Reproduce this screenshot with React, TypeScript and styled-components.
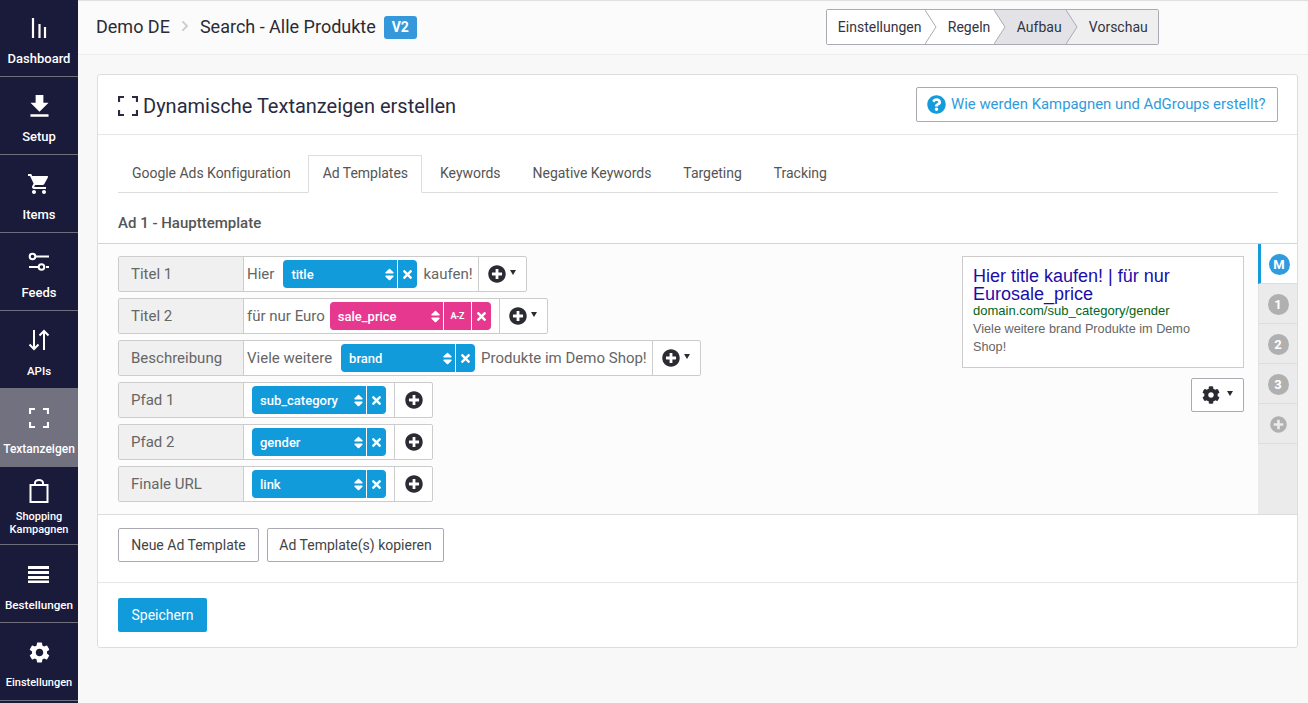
import React from "react";
import styled, { createGlobalStyle } from "styled-components";
import { FaCog, FaPlusCircle, FaQuestionCircle, FaSort, FaTimes, FaChevronRight } from "react-icons/fa";
import { MdFileDownload, MdShoppingCart, MdSettings } from "react-icons/md";

const Global = createGlobalStyle`
  html, body { margin: 0; padding: 0; height: 100%; overflow: hidden; background: #f8f8f8; }
  body { font-family: Roboto, "Liberation Sans", sans-serif; font-size: 14px; color: #555; }
  * { box-sizing: border-box; }
`;

const Shell = styled.div`display: flex; width: 1308px; height: 703px;`;

const Sidebar = styled.nav`width: 78px; flex: none; background: #1a1a3a; display: flex; flex-direction: column; overflow: hidden;`;
const NavItem = styled.div<{ $active?: boolean }>`
  height: 78px; flex: none; border-bottom: 1px solid ${p => (p.$active ? "#72717f" : "#6e6e7c")};
  background: ${p => (p.$active ? "#72717f" : "transparent")};
  ${p => (p.$active ? "box-shadow: 0 -1px 0 #72717f;" : "")}
  color: #fff; display: flex; flex-direction: column; align-items: center;
  &:first-child { margin-top: -1px; }
`;
const NavIcon = styled.div<{ $short?: boolean }>`height: ${p => (p.$short ? 30 : 40)}px; margin-top: 9px; display: flex; align-items: center; justify-content: center; flex: none;`;
const NavLabel = styled.div<{ $size?: number; $tight?: boolean }>`
  font-size: ${p => p.$size ?? 12}px; font-weight: 500; line-height: ${p => (p.$tight ? 13 : 16)}px; text-align: center; white-space: nowrap;
  margin-top: ${p => (p.$tight ? 4 : 3)}px;
`;

const Main = styled.main`flex: 1; min-width: 0; display: flex; flex-direction: column;`;
const TopBar = styled.header`
  height: 55px; flex: none; background: #fbfbfb; border-bottom: 1px solid #ececec; box-shadow: inset 0 1px 1px #ddd;
  display: flex; align-items: center; padding: 0 0 2px 18px; color: #2b2b36; font-size: 18px;
`;
const Crumb = styled.span``;
const CrumbSep = styled.span`display: inline-flex; color: #ccc; margin: 0 9px 0 9px;`;
const Badge = styled.span`
  background: #3498db; color: #fff; font-size: 14px; font-weight: 700; border-radius: 3px; width: 33px; height: 23px;
  display: inline-flex; align-items: center; justify-content: center; margin: 2px 0 0 8px;
`;
const Steps = styled.div`
  margin: 9px 0 0 409px; align-self: flex-start; display: flex; height: 36px; border: 1px solid #aaaab4; border-radius: 2px; background: #fff; overflow: hidden;
`;
const Step = styled.div<{ $w: number; $bg: string; $pl: number }>`
  width: ${p => p.$w}px; background: ${p => p.$bg}; font-size: 14px; color: #33333f; position: relative;
  display: flex; align-items: center; padding-left: ${p => p.$pl}px;
`;
const StepTip = styled.svg`position: absolute; right: -11px; top: 0; z-index: 1;`;
const StepText = styled.span`position: relative; z-index: 2;`;

const Content = styled.div`padding: 19px 10px 0 19px;`;
const Card = styled.section`background: #fff; border: 1px solid #ddd; border-radius: 3px; height: 574px; display: flex; flex-direction: column;`;
const CardHead = styled.div`height: 60px; flex: none; border-bottom: 1px solid #e6e6e6; display: flex; align-items: center; padding: 0 19px 0 20px; justify-content: space-between;`;
const CardTitle = styled.h1`margin: 2px 0 0; font-size: 20px; font-weight: 400; color: #2a2a40; display: flex; align-items: center; gap: 5px;`;
const HelpBtn = styled.div`
  height: 35px; width: 362px; border: 1px solid #aaaab4; border-radius: 2px; display: flex; align-items: center; padding-left: 10px; gap: 5px;
  color: #2f9bdc; font-size: 14.9px; margin-top: -1px;
`;
const TabsWrap = styled.div`padding: 20px 19px 0 20px;`;
const Tabs = styled.div`display: flex; gap: 4px; height: 38px; border-bottom: 1px solid #ddd;`;
const Tab = styled.div<{ $active?: boolean }>`
  height: 38px; padding: 0 13px 2px; display: flex; align-items: center; font-size: 14px; letter-spacing: -.03px; color: #555; white-space: nowrap;
  ${p => p.$active ? "background:#fff;border:1px solid #ddd;border-bottom-color:#fff;margin-left:-1px;padding-left:14px;" : "border:1px solid transparent;"}
`;
const SectionTitle = styled.h2`margin: 0; padding: 22px 20px 0; height: 50px; font-size: 15px; font-weight: 500; line-height: 17px; color: #555;`;
const Editor = styled.div`height: 272px; flex: none; background: #fcfcfc; border-top: 1px solid #d4d4d4; border-bottom: 1px solid #ddd; display: flex;`;
const Rows = styled.div`flex: 1; padding: 12px 0 0 20px; display: flex; flex-direction: column; gap: 6px;`;
const Row = styled.div`display: flex; height: 36px; width: fit-content; border: 1px solid #ccc; border-radius: 2px; background: #fff;`;
const RowLabel = styled.div`width: 125px; background: #f0f0f0; border-right: 1px solid #ccc; padding-left: 12px; display: flex; align-items: center; color: #666; font-size: 15px;`;
const RowBody = styled.div<{ $pl?: number; $pr?: number }>`display: flex; align-items: center; padding: 0 ${p => p.$pr ?? 5}px 0 ${p => p.$pl ?? 3}px;`;
const Txt = styled.span<{ $mr?: number; $ml?: number }>`color: #666; font-size: 15px; white-space: nowrap; margin-right: ${p => p.$mr ?? 0}px; margin-left: ${p => p.$ml ?? 0}px;`;
const Pill = styled.div<{ $pink?: boolean }>`display: flex; height: 28px; color: #fff; border-radius: 4px; overflow: hidden; gap: 1px; font-size: 13px; font-weight: 500; & > * { background: ${p => (p.$pink ? "#e6388f" : "#129bdb")}; }`;
const PillSelect = styled.div<{ $w?: number }>`width: ${p => p.$w ?? 114}px; display: flex; align-items: center; justify-content: space-between; padding: 0 0 0 8px;`;
const PillBtn = styled.div<{ $w?: number }>`width: ${p => p.$w ?? 19}px; display: flex; align-items: center; justify-content: center;`;
const AZ = styled.span`font-size: 9px; font-weight: 700; letter-spacing: -.5px;`;
const AddCell = styled.div<{ $narrow?: boolean }>`
  width: ${p => (p.$narrow ? 38 : 48)}px; border-left: 1px solid #ccc; display: flex; align-items: center; justify-content: center; gap: 4px; color: #2b2b33;
`;
const Caret = styled.span`width: 0; height: 0; border-left: 3px solid transparent; border-right: 3px solid transparent; border-top: 5px solid currentColor; margin-top: -3px;`;

const PreviewCol = styled.div`width: 282px; flex: none; margin-right: 14px; padding-top: 12px; display: flex; flex-direction: column; align-items: flex-end;`;
const Preview = styled.div`width: 100%; height: 112px; background: #fff; border: 1px solid #ccc; padding: 9px 30px 0 10px; font-family: "Liberation Sans", Arial, sans-serif;`;
const AdTitle = styled.div`font-size: 18px; line-height: 18px; color: #1a0dab; padding-top: 1px; margin-bottom: -1px;`;
const AdUrl = styled.div`font-size: 13px; line-height: 18px; color: #006621;`;
const AdDesc = styled.div`font-size: 12.7px; line-height: 18px; color: #666;`;
const GearBtn = styled.div`width: 53px; height: 34px; border: 1px solid #aaaab4; border-radius: 2px; background: #fff; margin-top: 10px; display: flex; align-items: center; justify-content: center; gap: 7px; color: #2b2b33;`;

const SideTabs = styled.div`width: 39px; flex: none; background: #ebebeb; display: flex; flex-direction: column;`;
const SideTab = styled.div<{ $active?: boolean }>`
  height: 40px; padding-top: 2px; display: flex; align-items: center; justify-content: center; color: #b0b0b0; border-bottom: 1px solid #ddd; border-left: 1px solid #e2e2e2;
  ${p => p.$active ? "background:#fff;border-left:3px solid #139bdc;" : ""}
`;
const Num = styled.span<{ $blue?: boolean }>`width: 21px; height: 21px; border-radius: 50%; background: ${p => (p.$blue ? "#2f9be0" : "#b0b0b0")}; color: #fff; font-size: 13px; font-weight: 700; display: flex; align-items: center; justify-content: center;`;

const Actions = styled.div`height: 68px; flex: none; border-bottom: 1px solid #e6e6e6; display: flex; gap: 8px; padding: 13px 20px 0;`;
const Btn = styled.div<{ $w: number }>`width: ${p => p.$w}px; height: 34px; border: 1px solid #aaaab4; border-radius: 2px; background: #fff; display: flex; align-items: center; justify-content: center; color: #444; font-size: 14px; white-space: nowrap;`;
const Footer = styled.div`padding: 15px 20px;`;
const Primary = styled.div`width: 89px; height: 34px; background: #129bdb; color: #fff; border-radius: 2px; display: flex; align-items: center; justify-content: center; font-size: 14px;`;

const BarsIcon = () => (
  <svg width="16" height="20" viewBox="0 0 16 20" fill="none" stroke="#fff" strokeWidth="2.2">
    <path d="M2 0v20M8.5 6v14M14 9v11" />
  </svg>
);
const SlidersIcon = () => (
  <svg width="22" height="20" viewBox="0 0 22 20" fill="none" stroke="#fff" strokeWidth="2">
    <circle cx="4.5" cy="4.5" r="2.8" /><path d="M8 4.5h13M1 15h10M18 15h3" /><circle cx="13.5" cy="15" r="2.8" />
  </svg>
);
const ArrowsIcon = () => (
  <svg width="22" height="22" viewBox="0 0 22 22" fill="none" stroke="#fff" strokeWidth="2">
    <path d="M6 1v19M1.5 15.5 6 20l4.5-4.5M16 21V2M11.5 6.5 16 2l4.5 4.5" />
  </svg>
);
const CornersIcon = ({ color = "#fff", size = 20 }: { color?: string; size?: number }) => (
  <svg width={size} height={size} viewBox="0 0 20 20" fill="none" stroke={color} strokeWidth="2.2">
    <path d="M1 6V1h5M14 1h5v5M19 14v5h-5M6 19H1v-5" />
  </svg>
);
const BagIcon = () => (
  <svg width="20" height="24" viewBox="0 0 20 24" fill="none" stroke="#fff" strokeWidth="2">
    <rect x="1.5" y="6" width="17" height="17" /><path d="M6 6V4a4 3 0 0 1 8 0v2" />
  </svg>
);
const LinesIcon = () => (
  <svg width="22" height="18" viewBox="0 0 22 18" fill="#fff">
    <rect y="1" width="21" height="3" /><rect y="6" width="21" height="3" /><rect y="11" width="21" height="3" /><rect y="15.5" width="21" height="2.5" />
  </svg>
);

const tip = (fill: string) => (
  <StepTip width="12" height="34" viewBox="0 0 12 34"><path d="M0 0 11 17 0 34Z" fill={fill} /><path d="M0 0 11 17 0 34" fill="none" stroke="#aaaab4" /></StepTip>
);

const Token = ({ name, pink }: { name: string; pink?: boolean }) => (
  <Pill $pink={pink}>
    <PillSelect $w={pink ? 113 : 114}>{name}<FaSort size={15} /></PillSelect>
    {pink && <PillBtn $w={27}><AZ>A-Z</AZ></PillBtn>}
    <PillBtn><FaTimes size={13} /></PillBtn>
  </Pill>
);
const Add = ({ narrow }: { narrow?: boolean }) => (
  <AddCell $narrow={narrow}><FaPlusCircle size={18} />{!narrow && <Caret />}</AddCell>
);

export default function App() {
  return (
    <Shell>
      <Global />
      <Sidebar>
        <NavItem><NavIcon><BarsIcon /></NavIcon><NavLabel $size={13}>Dashboard</NavLabel></NavItem>
        <NavItem><NavIcon><MdFileDownload size={31} /></NavIcon><NavLabel $size={13}>Setup</NavLabel></NavItem>
        <NavItem><NavIcon><MdShoppingCart size={24} /></NavIcon><NavLabel $size={13}>Items</NavLabel></NavItem>
        <NavItem><NavIcon><SlidersIcon /></NavIcon><NavLabel $size={13}>Feeds</NavLabel></NavItem>
        <NavItem><NavIcon><ArrowsIcon /></NavIcon><NavLabel $size={11.5}>APIs</NavLabel></NavItem>
        <NavItem $active><NavIcon><CornersIcon /></NavIcon><NavLabel>Textanzeigen</NavLabel></NavItem>
        <NavItem><NavIcon $short><BagIcon /></NavIcon><NavLabel $size={11} $tight>Shopping<br />Kampagnen</NavLabel></NavItem>
        <NavItem><NavIcon><LinesIcon /></NavIcon><NavLabel $size={11.7}>Bestellungen</NavLabel></NavItem>
        <NavItem><NavIcon><MdSettings size={25} /></NavIcon><NavLabel $size={11}>Einstellungen</NavLabel></NavItem>
      </Sidebar>
      <Main>
        <TopBar>
          <Crumb>Demo DE</Crumb>
          <CrumbSep><FaChevronRight size={12} /></CrumbSep>
          <Crumb>Search - Alle Produkte</Crumb>
          <Badge>V2</Badge>
          <Steps>
            <Step $w={99} $bg="#fff" $pl={11}><StepText>Einstellungen</StepText>{tip("#fff")}</Step>
            <Step $w={69} $bg="#fff" $pl={22}><StepText>Regeln</StepText>{tip("#fff")}</Step>
            <Step $w={72} $bg="#e3e3e7" $pl={22}><StepText>Aufbau</StepText>{tip("#e3e3e7")}</Step>
            <Step $w={91} $bg="#efeff0" $pl={22}><StepText>Vorschau</StepText></Step>
          </Steps>
        </TopBar>
        <Content>
          <Card>
            <CardHead>
              <CardTitle><CornersIcon color="#2a2a40" />Dynamische Textanzeigen erstellen</CardTitle>
              <HelpBtn><FaQuestionCircle size={19} color="#139bdc" />Wie werden Kampagnen und AdGroups erstellt?</HelpBtn>
            </CardHead>
            <TabsWrap>
              <Tabs>
                <Tab>Google Ads Konfiguration</Tab>
                <Tab $active>Ad Templates</Tab>
                <Tab>Keywords</Tab>
                <Tab>Negative Keywords</Tab>
                <Tab>Targeting</Tab>
                <Tab>Tracking</Tab>
              </Tabs>
            </TabsWrap>
            <SectionTitle>Ad 1 - Haupttemplate</SectionTitle>
            <Editor>
              <Rows>
                <Row>
                  <RowLabel>Titel 1</RowLabel>
                  <RowBody><Txt $mr={9}>Hier</Txt><Token name="title" /><Txt $ml={6}>kaufen!</Txt></RowBody>
                  <Add />
                </Row>
                <Row>
                  <RowLabel>Titel 2</RowLabel>
                  <RowBody $pr={8}><Txt $mr={5}>für nur Euro</Txt><Token name="sale_price" pink /></RowBody>
                  <Add />
                </Row>
                <Row>
                  <RowLabel>Beschreibung</RowLabel>
                  <RowBody><Txt $mr={9}>Viele weitere</Txt><Token name="brand" /><Txt $ml={6}>Produkte im Demo Shop!</Txt></RowBody>
                  <Add />
                </Row>
                <Row>
                  <RowLabel>Pfad 1</RowLabel>
                  <RowBody $pl={8} $pr={8}><Token name="sub_category" /></RowBody>
                  <Add narrow />
                </Row>
                <Row>
                  <RowLabel>Pfad 2</RowLabel>
                  <RowBody $pl={8} $pr={8}><Token name="gender" /></RowBody>
                  <Add narrow />
                </Row>
                <Row>
                  <RowLabel>Finale URL</RowLabel>
                  <RowBody $pl={8} $pr={8}><Token name="link" /></RowBody>
                  <Add narrow />
                </Row>
              </Rows>
              <PreviewCol>
                <Preview>
                  <AdTitle>Hier title kaufen! | für nur Eurosale_price</AdTitle>
                  <AdUrl>domain.com/sub_category/gender</AdUrl>
                  <AdDesc>Viele weitere brand Produkte im Demo Shop!</AdDesc>
                </Preview>
                <GearBtn><FaCog size={18} /><Caret /></GearBtn>
              </PreviewCol>
              <SideTabs>
                <SideTab $active><Num $blue>M</Num></SideTab>
                <SideTab><Num>1</Num></SideTab>
                <SideTab><Num>2</Num></SideTab>
                <SideTab><Num>3</Num></SideTab>
                <SideTab><FaPlusCircle size={17} /></SideTab>
              </SideTabs>
            </Editor>
            <Actions>
              <Btn $w={141}>Neue Ad Template</Btn>
              <Btn $w={177}>Ad Template(s) kopieren</Btn>
            </Actions>
            <Footer><Primary>Speichern</Primary></Footer>
          </Card>
        </Content>
      </Main>
    </Shell>
  );
}
